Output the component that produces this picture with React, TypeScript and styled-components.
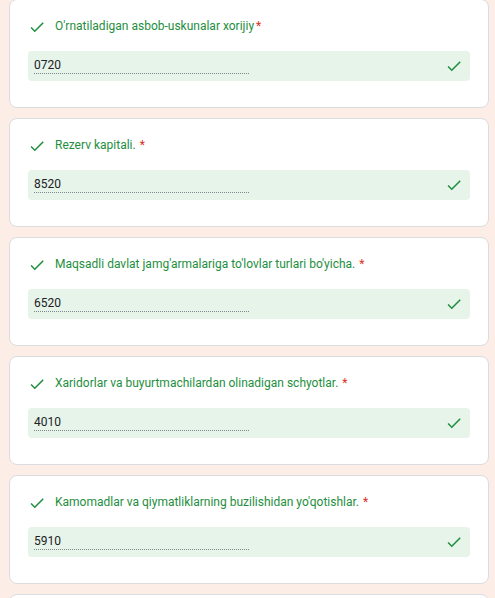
import styled, { createGlobalStyle } from "styled-components";

const GlobalStyle = createGlobalStyle`
  html, body {
    margin: 0;
    padding: 0;
    background: #fdede7;
  }
  body {
    font-family: Roboto, "Liberation Sans", Arial, sans-serif;
  }
`;

const questions = [
  { title: "O'rnatiladigan asbob-uskunalar xorijiy", value: "0720", tight: true },
  { title: "Rezerv kapitali.", value: "8520" },
  { title: "Maqsadli davlat jamg'armalariga to'lovlar turlari bo'yicha.", value: "6520" },
  { title: "Xaridorlar va buyurtmachilardan olinadigan schyotlar.", value: "4010" },
  { title: "Kamomadlar va qiymatliklarning buzilishidan yo'qotishlar.", value: "5910" },
  { title: "", value: "" },
];

function CheckIcon() {
  return (
    <svg width="18" height="18" viewBox="0 0 24 24" fill="#1e8e3e">
      <path d="M9 16.17L4.83 12l-1.42 1.41L9 19 21 7l-1.41-1.41z" />
    </svg>
  );
}

const List = styled.div`
  display: flex;
  flex-direction: column;
  gap: 10px;
  width: 480px;
  margin: -1px 0 0 9px;
`;

const Card = styled.div`
  box-sizing: border-box;
  background: #fff;
  border: 1px solid #dadce0;
  border-radius: 8px;
  padding: 18px 18px 26px;
  min-height: 109px;
`;

const Header = styled.div`
  display: flex;
  align-items: center;
  gap: 9px;
  height: 18px;
`;

const Title = styled.span`
  font-size: 12px;
  line-height: 16px;
  color: #1e8e3e;
  margin-top: -2px;
`;

const Required = styled.span<{ $tight?: boolean }>`
  color: #d93025;
  margin-left: ${(p) => (p.$tight ? "2px" : "4px")};
`;

const Field = styled.div`
  display: flex;
  align-items: center;
  justify-content: space-between;
  height: 30px;
  margin-top: 15px;
  padding: 0 7px 0 6px;
  background: #e6f4ea;
  border-radius: 4px;
`;

const Value = styled.span`
  width: 215px;
  font-size: 12px;
  line-height: 15px;
  color: #202124;
  border-bottom: 1px dotted #80868b;
`;

const Icon = styled.span`
  display: flex;
  width: 18px;
  height: 18px;
`;

export default function App() {
  return (
    <>
      <GlobalStyle />
      <List>
        {questions.map((q, i) => (
          <Card key={i}>
            {q.title && (
              <>
                <Header>
                  <Icon>
                    <CheckIcon />
                  </Icon>
                  <Title>
                    {q.title}
                    <Required $tight={q.tight}>*</Required>
                  </Title>
                </Header>
                <Field>
                  <Value>{q.value}</Value>
                  <Icon>
                    <CheckIcon />
                  </Icon>
                </Field>
              </>
            )}
          </Card>
        ))}
      </List>
    </>
  );
}
